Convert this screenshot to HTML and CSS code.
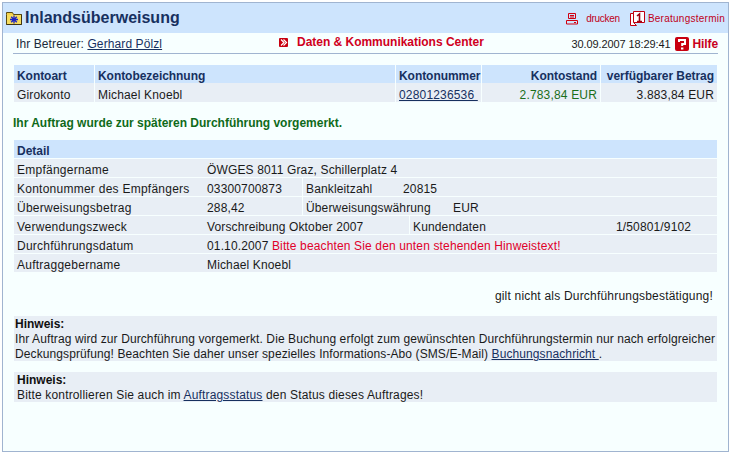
FILE: index.html
```html
<!DOCTYPE html>
<html lang="de">
<head>
<meta charset="utf-8">
<title>Inlandsüberweisung</title>
<link rel="stylesheet" href="styles.css">
</head>
<body>
<main class="frame">
  <header class="head">
    <div class="head-title">
      <svg class="ico-folder" width="16" height="14" viewBox="0 0 16 14"><path d="M.5 3.500V1.500h6l1 2h8v10H.5z" fill="#f4d24a" stroke="#5a4a10"/><rect x="1" y="4" width="14" height="9" fill="#f6dc5e"/><path d="M8 4.500v8M4 8.500h8M5.200 5.700l5.600 5.600M10.800 5.700l-5.600 5.600" stroke="#1a22c8" stroke-width="1.300"/><path d="M.5 13.500h15V3.500" fill="none" stroke="#3f3410"/></svg>
      <h1 class="title">Inlandsüberweisung</h1>
    </div>
    <div class="head-tools">
      <a class="tool tool-print">
        <svg width="12" height="12" viewBox="0 0 12 12"><path d="M2.500.5h7v5h-7zM4 2.500h4M4 4h4M.5 7.500h11v3.500H.5zM8 9.500h2" fill="none" stroke="#d00010"/></svg>
        <span class="tool-narrow">drucken</span></a>
      <a class="tool">
        <svg width="15" height="15" viewBox="0 0 15 15"><path d="M3.500.5h11v11h-11z" fill="#fff" stroke="#c00010"/><path d="M.5 2.500h3v9l3 3h-6z" fill="#fff" stroke="#c00010"/><path d="M7 5l2.500-2v7.500M7 10.500h5" fill="none" stroke="#a00010" stroke-width="1.600"/></svg>
        <span class="tool-wide">Beratungstermin</span></a>
    </div>
  </header>

  <section class="sub">
    <div class="advisor">Ihr Betreuer: <a class="link">Gerhard Pölzl</a></div>
    <a class="center-link">
      <svg width="9" height="9" viewBox="0 0 9 9"><rect width="9" height="9" rx="1" fill="#c80010"/><path d="M2 1.500l3 3-3 3M4.500 1.500l3 3-3 3" fill="none" stroke="#fff" stroke-width="1.200"/></svg>
      <span>Daten &amp; Kommunikations Center</span></a>
    <div class="sub-right">
      <span class="stamp">30.09.2007 18:29:41</span>
      <a class="help">
        <svg width="14" height="14" viewBox="0 0 14 14"><rect width="14" height="14" rx="2" fill="#c80010"/><path d="M4 5V3h6v4H7.200v2" fill="none" stroke="#fff" stroke-width="2"/><rect x="6" y="10.500" width="2.400" height="2" fill="#fff"/></svg>
        Hilfe</a>
    </div>
  </section>

  <section class="accounts">
    <div class="row row-head">
      <div class="c c-art">Kontoart</div>
      <div class="c c-bez">Kontobezeichnung</div>
      <div class="c c-num">Kontonummer</div>
      <div class="c c-st r">Kontostand</div>
      <div class="c c-vf r">verfügbarer Betrag</div>
    </div>
    <div class="row row-body">
      <div class="c c-art">Girokonto</div>
      <div class="c c-bez">Michael Knoebl</div>
      <div class="c c-num"><a class="link">02801236536&nbsp;</a></div>
      <div class="c c-st r green">2.783,84 EUR</div>
      <div class="c c-vf r">3.883,84 EUR</div>
    </div>
  </section>

  <p class="notice">Ihr Auftrag wurde zur späteren Durchführung vorgemerkt.</p>

  <section class="detail">
    <div class="d-head">Detail</div>
    <div class="d-row"><div class="d-label">Empfängername</div><div class="d-val">ÖWGES 8011 Graz, Schillerplatz 4</div></div>
    <div class="d-row"><div class="d-label">Kontonummer des Empfängers</div><div class="d-val d-v2">03300700873</div><div class="d-val d-l3">Bankleitzahl</div><div class="d-val">20815</div></div>
    <div class="d-row"><div class="d-label">Überweisungsbetrag</div><div class="d-val d-v2">288,42</div><div class="d-val d-l3b">Überweisungswährung</div><div class="d-val">EUR</div></div>
    <div class="d-row"><div class="d-label">Verwendungszweck</div><div class="d-val d-v4">Vorschreibung Oktober 2007</div><div class="d-val d-l4">Kundendaten</div><div class="d-val">1/50801/9102</div></div>
    <div class="d-row"><div class="d-label">Durchführungsdatum</div><div class="d-val">01.10.2007 <span class="red">Bitte beachten Sie den unten stehenden Hinweistext!</span></div></div>
    <div class="d-row"><div class="d-label">Auftraggebername</div><div class="d-val">Michael Knoebl</div></div>
  </section>

  <p class="disclaimer">gilt nicht als Durchführungsbestätigung!</p>

  <section class="hint hint-a">
    <div class="hint-line"><strong>Hinweis:</strong></div>
    <div class="hint-line">Ihr Auftrag wird zur Durchführung vorgemerkt. Die Buchung erfolgt zum gewünschten Durchführungstermin nur nach erfolgreicher</div>
    <div class="hint-line"><span>Deckungsprüfung! Beachten Sie daher unser spezielles Informations-Abo (SMS/E-Mail) </span><a class="link">Buchungsnachricht </a><span class="dot">.</span></div>
  </section>

  <section class="hint hint-b">
    <div class="hint-line"><strong>Hinweis:</strong></div>
    <div class="hint-line">Bitte kontrollieren Sie auch im <a class="link">Auftragsstatus</a> den Status dieses Auftrages!</div>
  </section>
</main>
</body>
</html>
```
FILE: styles.css
```css
* { box-sizing: border-box; }
html, body { margin: 0; padding: 0; background: #fff; }
body {
  font-family: "Liberation Sans", Arial, sans-serif;
  font-size: 12px;
  line-height: 15px;
  color: #1a1a1a;
  letter-spacing: .12px;
  width: 731px;
  height: 453px;
  padding: 2px;
  overflow: hidden;
}
.frame {
  width: 727px;
  height: 450px;
  border: 1px solid #a0b4d0;
  background: #f7ffff;
}
.head {
  height: 30px;
  background: #cde4fd;
  display: flex;
  justify-content: space-between;
  align-items: center;
  padding: 0 3px 0 3px;
}
.head-title { display: flex; align-items: center; gap: 3px; }
.title { margin: 0; font-size: 16px; line-height: 20px; font-weight: bold; color: #17305f; letter-spacing: 0; }
.head-tools { display: flex; gap: 10px; align-items: center; padding-top: 1px; }
.tool { display: flex; align-items: center; gap: 3px; font-size: 10px; color: #c00020; letter-spacing: 0; }
.tool-print { gap: 8px; }
.tool-narrow { letter-spacing: -.28px; }
.tool-wide { letter-spacing: .25px; }
.sub {
  margin: 0 10px 0 10px;
  height: 21px;
  border-bottom: 1px solid #a0b4d0;
  display: flex;
  align-items: center;
  padding-left: 3px;
}
.advisor { font-size: 12px; width: 263px; padding-top: 2px; color: #1a2a3a; letter-spacing: .1px; white-space: nowrap; }
.link { color: #17305f; text-decoration: underline; }
.center-link { display: flex; align-items: center; gap: 9px; color: #d0001c; font-weight: bold; font-size: 12px; margin-top: -2px; letter-spacing: -.02px; }
.sub-right { margin-left: auto; display: flex; align-items: center; gap: 5px; padding-top: 2px; }
.stamp { font-size: 11px; letter-spacing: -.1px; }
.help { display: flex; align-items: center; gap: 3px; color: #c80020; font-weight: bold; font-size: 12px; letter-spacing: -.1px; }
.accounts { margin: 11px 0 0 11px; width: 703px; }
.row { display: flex; gap: 1px; }
.row-head { height: 18px; color: #17305f; font-weight: bold; letter-spacing: -.05px; }
.row-head .c { background: #cde4fd; padding-top: 4px; }
.row-body { height: 19px; letter-spacing: .17px; }
.row-body .c { background: #e8eef5; padding-top: 5px; }
.c { padding: 2px 3px 0; white-space: nowrap; }
.c-art { width: 80px; }
.c-bez { width: 300px; }
.c-num { width: 85px; }
.c-st { width: 118px; }
.c-vf { flex: 1; }
.r { text-align: right; }
.green { color: #1a6f1a; }
.notice { margin: 14px 0 0 10px; height: 15px; font-weight: bold; color: #0f6a1a; letter-spacing: -.01px; }
.detail { margin: 9px 0 0 11px; width: 703px; }
.d-head { height: 18px; background: #cde4fd; color: #17305f; font-weight: bold; padding: 4px 3px 0; letter-spacing: 0; }
.d-row { height: 19px; background: #e8eef5; border-top: 1px solid #f7ffff; display: flex; white-space: nowrap; }
.d-label, .d-val { padding-top: 4px; }
.d-label { width: 193px; padding-left: 3px; letter-spacing: .25px; }
.d-val { letter-spacing: .14px; }
.d-v2 { width: 96px; border-right: 1px solid #f7ffff; }
.d-l3 { width: 100px; padding-left: 3px; }
.d-l3b { width: 150px; padding-left: 3px; }
.d-v4 { width: 203px; border-right: 1px solid #f7ffff; }
.d-l4 { width: 206px; padding-left: 3px; }
.red { color: #e0002a; }
.disclaimer { margin: 17px 15px 0 0; text-align: right; height: 15px; letter-spacing: .2px; }
.hint { margin-left: 11px; width: 703px; background: #e8eef5; }
.hint strong { color: #101010; letter-spacing: 0; }
.hint-line { white-space: pre; }
.hint-a { margin-top: 12px; height: 45px; padding: 1px 0 0 1px; letter-spacing: .1px; }
.hint-b { margin-top: 11px; height: 30px; padding: 1px 0 0 3px; letter-spacing: .16px; }
```
